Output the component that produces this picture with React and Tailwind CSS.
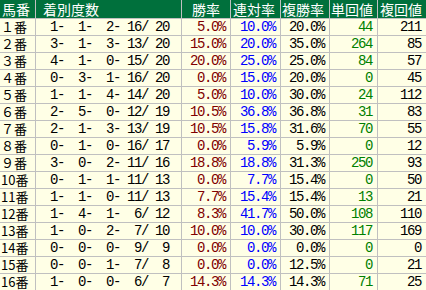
const rows = [
  ['１番', 1, 1, 2, 16, 20, '5.0%', '10.0%', '20.0%', 44, 211],
  ['２番', 3, 1, 3, 13, 20, '15.0%', '20.0%', '35.0%', 264, 85],
  ['３番', 4, 1, 0, 15, 20, '20.0%', '25.0%', '25.0%', 84, 57],
  ['４番', 0, 3, 1, 16, 20, '0.0%', '15.0%', '20.0%', 0, 45],
  ['５番', 1, 1, 4, 14, 20, '5.0%', '10.0%', '30.0%', 24, 112],
  ['６番', 2, 5, 0, 12, 19, '10.5%', '36.8%', '36.8%', 31, 83],
  ['７番', 2, 1, 3, 13, 19, '10.5%', '15.8%', '31.6%', 70, 55],
  ['８番', 0, 1, 0, 16, 17, '0.0%', '5.9%', '5.9%', 0, 12],
  ['９番', 3, 0, 2, 11, 16, '18.8%', '18.8%', '31.3%', 250, 93],
  ['10番', 0, 1, 1, 11, 13, '0.0%', '7.7%', '15.4%', 0, 50],
  ['11番', 1, 1, 0, 11, 13, '7.7%', '15.4%', '15.4%', 13, 21],
  ['12番', 1, 4, 1, 6, 12, '8.3%', '41.7%', '50.0%', 108, 110],
  ['13番', 1, 0, 2, 7, 10, '10.0%', '10.0%', '30.0%', 117, 169],
  ['14番', 0, 0, 0, 9, 9, '0.0%', '0.0%', '0.0%', 0, 0],
  ['15番', 0, 0, 1, 7, 8, '0.0%', '0.0%', '12.5%', 0, 21],
  ['16番', 1, 0, 0, 6, 7, '14.3%', '14.3%', '14.3%', 71, 25],
]

const pad = (n) => String(n).padStart(3, ' ')

const headers = [
  { label: '馬番', cls: 'pl-[2px]' },
  { label: '着別度数', cls: 'pl-[7px]' },
  { label: '勝率', cls: 'pl-[10px]' },
  { label: '連対率', cls: 'pl-[2px]' },
  { label: '複勝率', cls: 'pl-[1px]' },
  { label: '単回値', cls: 'pl-[1px]' },
  { label: '複回値', cls: 'pl-[2px]' },
]

// shared number cell look
const num = "font-['Liberation_Mono',monospace] text-[14px] tracking-[-1.4px] whitespace-pre text-right pr-[5px] leading-[16px] bg-[#ffffe6]"

export default function App() {
  return (
    <div className="w-[426px] h-[290px] overflow-hidden bg-white">
      <div className="grid grid-cols-[35px_145px_48px_49px_48px_47px_48px] grid-rows-[18px] auto-rows-[16px] gap-px bg-[#c0c0c0]">
        {headers.map((h) => (
          <div
            key={h.label}
            className={`bg-[#00703c] text-white text-[14px] leading-[18px] font-['Noto_Sans_CJK_JP',sans-serif] ${h.cls}`}
          >
            {h.label}
          </div>
        ))}
        {rows.map((r) => (
          <Row key={r[0]} r={r} />
        ))}
      </div>
    </div>
  )
}

function Row({ r }) {
  const [name, a, b, c, d, e, win, ren, fuku, tan, fukuVal] = r
  return (
    <>
      <div className="bg-[#ffffe6] pl-[1px] text-[13px] leading-[16px] text-black font-['Noto_Sans_CJK_JP',sans-serif]">
        {name}
      </div>
      <div className={`${num} text-black pr-[12px]`}>
        {`${pad(a)}-${pad(b)}-${pad(c)}-${pad(d)}/${pad(e)}`}
      </div>
      <div className={`${num} text-[#800000]`}>{win}</div>
      <div className={`${num} text-[#0000ff]`}>{ren}</div>
      <div className={`${num} text-black`}>{fuku}</div>
      <div className={`${num} text-[#008000]`}>{tan}</div>
      <div className={`${num} text-black`}>{fukuVal}</div>
    </>
  )
}
